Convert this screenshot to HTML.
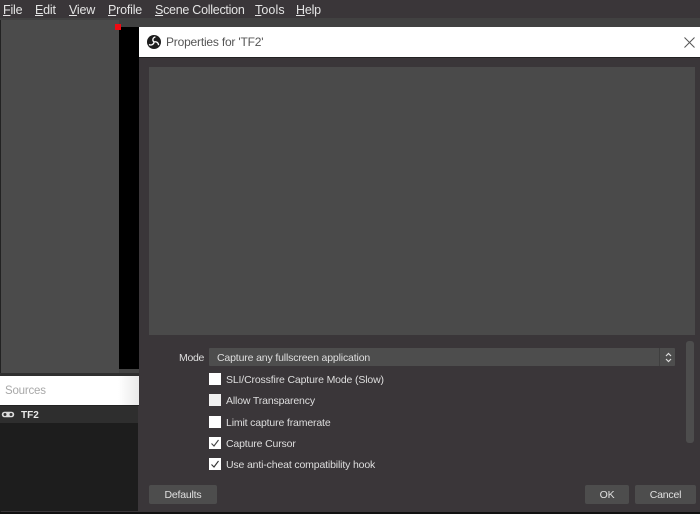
<!DOCTYPE html>
<html>
<head>
<meta charset="utf-8">
<style>
html,body{margin:0;padding:0;width:700px;height:514px;overflow:hidden;background:#3a3639;}
body{position:relative;font-family:"Liberation Sans",sans-serif;}
.a{position:absolute;}
.t{position:absolute;white-space:nowrap;color:#e0e0e0;}
.m{font-family:"Liberation Sans",sans-serif;font-size:12.5px;top:2px;color:#e4e4e4;line-height:16px;letter-spacing:-.2px;}
.m u{text-decoration:underline;text-underline-offset:1px;}
.c{font-family:"Liberation Sans",sans-serif;font-size:10.5px;line-height:14px;letter-spacing:-.15px;color:#dedede;}
.b{position:absolute;width:12px;height:12px;background:#fff;left:209px;}
.btn{position:absolute;background:#4d4d4d;border-radius:2px;height:19px;top:485px;text-align:center;color:#e0e0e0;font-family:"Liberation Sans",sans-serif;font-size:10.5px;line-height:21px;letter-spacing:-.2px;}
</style>
</head>
<body>
<div class="a" style="left:0;top:0;width:700px;height:18px;background:#3a3639"></div>
<div class="a" style="left:0;top:18px;width:700px;height:9px;background:#414141"></div>
<div class="t m" style="left:3px"><u>F</u>ile</div>
<div class="t m" style="left:35px"><u>E</u>dit</div>
<div class="t m" style="left:69px"><u>V</u>iew</div>
<div class="t m" style="left:108px"><u>P</u>rofile</div>
<div class="t m" style="left:155px;letter-spacing:-.27px"><u>S</u>cene Collection</div>
<div class="t m" style="left:255px;letter-spacing:.1px"><u>T</u>ools</div>
<div class="t m" style="left:296px"><u>H</u>elp</div>

<div class="a" style="left:0;top:20px;width:1px;height:494px;background:#222"></div>
<div class="a" style="left:1px;top:20px;width:118px;height:353px;background:#4b4b4b"></div>
<div class="a" style="left:119px;top:27px;width:20px;height:342px;background:#000"></div>
<div class="a" style="left:115px;top:24px;width:6px;height:6px;background:#f00a12"></div>
<div class="a" style="left:119px;top:369px;width:20px;height:4px;background:#444"></div>
<div class="a" style="left:0;top:373px;width:139px;height:3px;background:#2f2f2f"></div>
<div class="a" style="left:0;top:376px;width:139px;height:29px;background:linear-gradient(90deg,#fff 85%,#e9e9e9)"></div>
<div class="t" style="left:5px;top:384px;font-family:'Liberation Sans',sans-serif;font-size:11.5px;line-height:15px;color:#a8a8a8;letter-spacing:-.2px">Sources</div>
<div class="a" style="left:0;top:405px;width:139px;height:1px;background:#222"></div>
<div class="a" style="left:0;top:406px;width:138px;height:17px;background:#2e2e2e"></div>
<div class="a" style="left:0;top:423px;width:138px;height:88px;background:#1d1d1d"></div>
<svg class="a" style="left:1px;top:411px" width="14" height="7" viewBox="0 0 14 7"><rect x=".8" y=".8" width="12.4" height="5.4" rx="2.6" fill="#dcdcdc"/><circle cx="4" cy="3.5" r="1.5" fill="#333"/><circle cx="10" cy="3.5" r="1.5" fill="#333"/></svg>
<div class="t" style="left:21px;top:409px;font-family:'Liberation Sans',sans-serif;font-weight:bold;font-size:10px;line-height:14px;color:#e8e8e8">TF2</div>

<div class="a" style="left:139px;top:27px;width:561px;height:30px;background:#fff"></div>
<svg class="a" style="left:147px;top:35px" width="14" height="14" viewBox="0 0 14 14"><circle cx="7" cy="7" r="7" fill="#1c1c1c"/><path d="M7 7C5.2 5.6 5.4 2.8 8.4 1.9M7 7C8.8 6.2 11.4 7.3 11.6 10.2M7 7C6.9 9.2 4.6 10.9 2 9.5" stroke="#fff" stroke-width="1.3" fill="none"/></svg>
<div class="t" style="left:166px;top:35px;font-family:'Liberation Sans',sans-serif;font-size:12px;line-height:15px;color:#555;letter-spacing:-.2px">Properties for 'TF2'</div>
<svg class="a" style="left:684px;top:37px" width="11" height="11" viewBox="0 0 11 11"><path d="M.5 .5L10.5 10.5M10.5 .5L.5 10.5" stroke="#555" stroke-width="1" fill="none"/></svg>

<div class="a" style="left:139px;top:57px;width:561px;height:1px;background:#222"></div>
<div class="a" style="left:139px;top:58px;width:561px;height:454px;background:#3a3639"></div>
<div class="a" style="left:149px;top:67px;width:546px;height:268px;background:#4a4a4a"></div>
<div class="a" style="left:0;top:512px;width:700px;height:2px;background:#111"></div>

<div class="t c" style="left:179px;top:351px;letter-spacing:-.3px">Mode</div>
<div class="a" style="left:209px;top:348px;width:466px;height:18px;background:#4d4d4d;border-radius:1px"></div>
<div class="a" style="left:659px;top:348px;width:1px;height:18px;background:#3f3f3f"></div>
<div class="t c" style="left:217px;top:351px">Capture any fullscreen application</div>
<svg class="a" style="left:665px;top:352px" width="7" height="11" viewBox="0 0 7 11"><path d="M1 4L3.5 1.5L6 4M1 7L3.5 9.5L6 7" stroke="#ddd" stroke-width="1.2" fill="none"/></svg>
<div class="a" style="left:686px;top:341px;width:8px;height:102px;background:#4d4d4d;border-radius:3px"></div>

<div class="b" style="top:373px"></div>
<div class="t c" style="left:226px;top:373px">SLI/Crossfire Capture Mode (Slow)</div>
<div class="b" style="top:394px;background:#f0f0f0"></div>
<div class="t c" style="left:226px;top:394px">Allow Transparency</div>
<div class="b" style="top:416px"></div>
<div class="t c" style="left:226px;top:416px">Limit capture framerate</div>
<div class="b" style="top:437px"></div>
<svg class="a" style="left:209px;top:437px" width="12" height="12" viewBox="0 0 12 12"><path d="M2.5 6.5L5 9L9.5 3" stroke="#444" stroke-width="1.1" fill="none"/></svg>
<div class="t c" style="left:226px;top:437px">Capture Cursor</div>
<div class="b" style="top:458px"></div>
<svg class="a" style="left:209px;top:458px" width="12" height="12" viewBox="0 0 12 12"><path d="M2.5 6.5L5 9L9.5 3" stroke="#333" stroke-width="1.1" fill="none"/></svg>
<div class="t c" style="left:226px;top:458px">Use anti-cheat compatibility hook</div>

<div class="btn" style="left:149px;width:68px">Defaults</div>
<div class="btn" style="left:585px;width:44px">OK</div>
<div class="btn" style="left:635px;width:61px">Cancel</div>
</body>
</html>
